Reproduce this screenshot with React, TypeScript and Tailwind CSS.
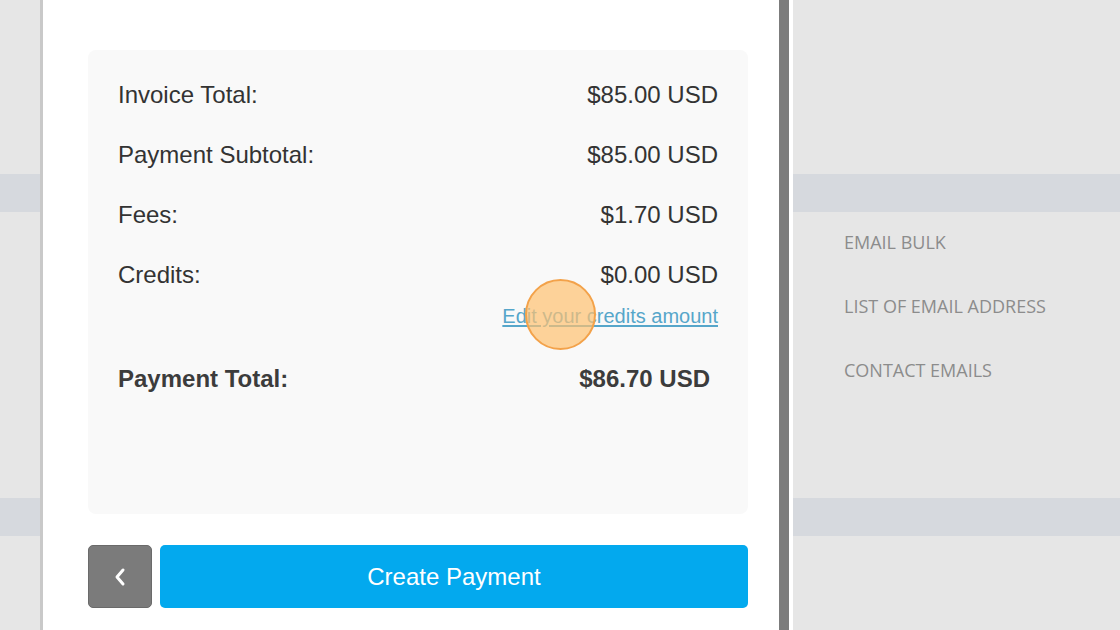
import React from 'react'

const rows = [
  { label: 'Invoice Total:', value: '$85.00 USD' },
  { label: 'Payment Subtotal:', value: '$85.00 USD' },
  { label: 'Fees:', value: '$1.70 USD' },
  { label: 'Credits:', value: '$0.00 USD' },
]

const menu = ['EMAIL BULK', 'LIST OF EMAIL ADDRESS', 'CONTACT EMAILS']

const Backdrop: React.FC<{ children?: React.ReactNode; className?: string }> = ({ children, className }) => (
  <div className={`flex flex-col h-full bg-[#e6e6e6] ${className ?? ''}`}>
    <div className="h-[174px]" />
    <div className="h-[38px] bg-[#d6d9de]" />
    <div className="h-[286px]">{children}</div>
    <div className="h-[38px] bg-[#d6d9de]" />
    <div className="flex-1" />
  </div>
)

const App: React.FC = () => {
  return (
    <div className="relative flex w-[1120px] h-[630px] overflow-hidden font-['Liberation_Sans',Arial,sans-serif]">
      <div className="w-[40px] shrink-0">
        <Backdrop />
      </div>

      <div className="w-[739px] shrink-0 bg-white border-l-[3px] border-[#c9c9c9] pl-[45px] pr-[31px] pt-[50px]">
        <div className="h-[464px] rounded-[8px] bg-[#f9f9f9] px-[30px] pt-[15px] text-[#333333] text-[24px]">
          {rows.map((r) => (
            <div key={r.label} className="flex h-[60px] items-center justify-between">
              <span>{r.label}</span>
              <span>{r.value}</span>
            </div>
          ))}
          <div className="flex justify-end leading-[22px] text-[20px]">
            <a href="#" className="text-[#56a6ca] underline underline-offset-2">Edit your credits amount</a>
          </div>
          <div className="mt-[22px] flex h-[60px] items-center justify-between pr-[8px] font-bold text-[#3c3c3c]">
            <span>Payment Total:</span>
            <span>$86.70 USD</span>
          </div>
        </div>

        <div className="mt-[31px] flex gap-[8px]">
          <button className="flex h-[63px] w-[64px] items-center justify-center rounded-[5px] border border-[#6a6a6a] bg-[#7b7b7b]">
            <svg width="14" height="20" viewBox="0 0 14 20" fill="none">
              <path d="M10 3 L4 10 L10 17" stroke="white" strokeWidth="3" strokeLinecap="round" strokeLinejoin="round" />
            </svg>
          </button>
          <button className="flex h-[63px] flex-1 items-center justify-center rounded-[5px] bg-[#03a9ee] text-[24px] text-white">
            Create Payment
          </button>
        </div>
      </div>

      <div className="w-[10px] shrink-0 bg-[#7c7c7c]" />
      <div className="w-[4px] shrink-0 bg-white" />

      <div className="flex-1 shadow-[inset_6px_0_6px_-4px_rgba(0,0,0,0.12)]">
        <Backdrop>
          <div className="flex flex-col pl-[51px] pt-[18px] gap-[40px] font-['Open_Sans',sans-serif] text-[18px] text-[#8c8c8c] leading-[24px]">
            {menu.map((m) => (
              <div key={m}>{m}</div>
            ))}
          </div>
        </Backdrop>
      </div>

      <div className="absolute left-[525px] top-[279px] h-[71px] w-[71px] rounded-full border-2 border-[#f3a24a] bg-[#ffc170]/70" />
    </div>
  )
}

export default App
